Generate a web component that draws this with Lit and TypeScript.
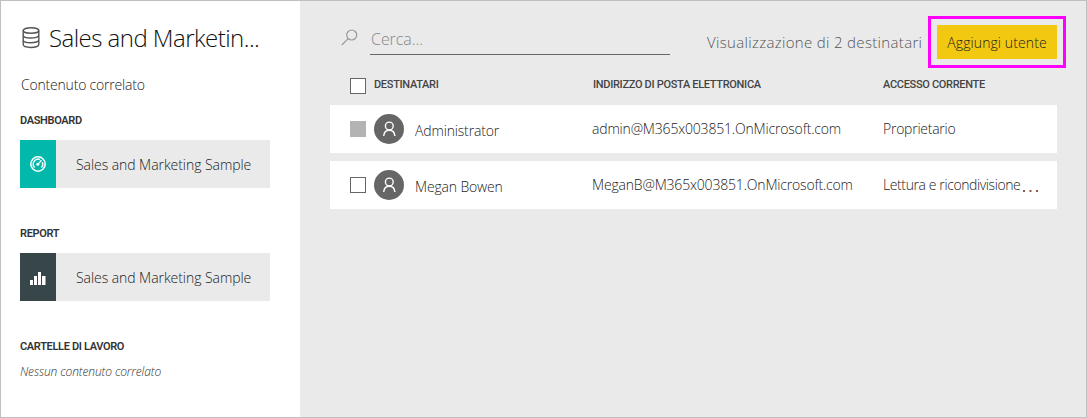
import { LitElement, html, css, svg } from "lit";
import { customElement, property } from "lit/decorators.js";

interface Recipient {
  name: string;
  mail: string;
  access: string;
  owner: boolean;
}

const recipients: Recipient[] = [
  { name: "Administrator", mail: "admin@M365x003851.OnMicrosoft.com", access: "Proprietario", owner: true },
  { name: "Megan Bowen", mail: "MeganB@M365x003851.OnMicrosoft.com", access: "Lettura e ricondivisione", owner: false },
];

const gauge = svg`
  <circle cx="8" cy="8" r="7.2" fill="none" stroke="#fff" stroke-width="1.5"/>
  <path d="M4.6 11.4A4.9 4.9 0 0 1 10 3.5M12.4 6.2A4.9 4.9 0 0 1 11.4 11.4" fill="none" stroke="#fff" stroke-width="1.4"/>
  <path d="M7.7 8.4L11.6 4.2" stroke="#fff" stroke-width="1.3"/>
  <circle cx="7.8" cy="8.3" r="1.5" fill="#fff"/>`;

const bars = svg`
  <path d="M0 11h3v5H0zM4 7h3v9H4zM8 3h3v13H8zM12 7h3.500v9H12z" fill="#fff"/>`;

@customElement("related-tile")
class RelatedTile extends LitElement {
  @property() kind = "dashboard";
  @property() label = "";

  static styles = css`
    :host { display: flex; width: 250px; height: 48px; background: #eaeaea; }
    .icon { width: 36px; display: flex; align-items: center; padding-left: 10px; box-sizing: border-box; }
    .dashboard { background: #01b8aa; }
    .report { background: #374649; }
    .label { padding-left: 20px; font-size: 14px; line-height: 49px; color: #222; white-space: nowrap; letter-spacing: -0.06px; }
  `;

  render() {
    return html`
      <div class="icon ${this.kind}">
        <svg width="16" height="16" viewBox="0 0 16 16">${this.kind === "dashboard" ? gauge : bars}</svg>
      </div>
      <div class="label">${this.label}</div>`;
  }
}

@customElement("app-root")
class AppRoot extends LitElement {
  static styles = css`
    :host {
      display: flex; box-sizing: border-box; width: 1087px; height: 418px;
      border: 1px solid #c0c0c0; background: #eaeaea; overflow: hidden;
      font-family: "Open Sans", "Noto Sans", sans-serif; font-weight: 300; color: #222;
    }
    * { box-sizing: border-box; }
    svg { display: block; flex: none; }
    .side { width: 299px; background: #fff; padding: 19px 0 0 19px; white-space: nowrap; }
    .title { display: flex; align-items: center; height: 36px; gap: 9px; margin-left: 2px; }
    .title-text { font-size: 24px; line-height: 36px; letter-spacing: -0.54px; color: #111; }
    .related { margin: 18px 0 0 1px; font-size: 14px; line-height: 22px; letter-spacing: -0.2px; }
    .group { font-family: Roboto, sans-serif; font-weight: 600; font-size: 11px; line-height: 16px; letter-spacing: -0.34px; color: #333; }
    .g1 { margin: 17px 0 11px; }
    .g2 { margin: 38px 0 11px; }
    .g3 { margin: 38px 0 0; }
    .none { margin-top: 7px; font-size: 12px; line-height: 19px; font-style: italic; letter-spacing: -0.12px; color: #333; }
    .main { width: 757px; padding: 24px 0 0 30px; }
    .bar { display: flex; height: 34px; }
    .glass { margin: 4px 12px 0 11px; }
    .search { width: 300px; height: 30px; border-bottom: 1px solid #666; font-size: 16px; line-height: 28px; letter-spacing: -0.05px; color: #888; padding-left: 1px; }
    .count { width: 230px; margin-left: 37px; font-size: 15px; line-height: 34px; letter-spacing: 0.33px; color: #555; white-space: nowrap; }
    .add {
      width: 120px; height: 34px; background: #f2c811; outline: 3px solid #ff00ff; outline-offset: 6px;
      text-align: center; font-size: 14px; line-height: 35px; letter-spacing: 0.1px; white-space: nowrap;
    }
    .grid { display: grid; grid-template-columns: 16px 219px 298px 170px; padding-left: 20px; width: 727px; white-space: nowrap; }
    .head { height: 46px; padding-top: 19px; font-family: Roboto, sans-serif; font-weight: 500; font-size: 11px; line-height: 13px; letter-spacing: -0.31px; color: #444; }
    .first { padding-left: 8px; }
    .box { width: 16px; height: 16px; border: 1px solid #666; background: #fff; }
    .locked { border-color: #b3b3b3; background: #b3b3b3; }
    .row { height: 48px; background: #fff; font-size: 14px; line-height: 48px; color: #222; margin-bottom: 8px; }
    .row .box { margin-top: 16px; }
    .person { display: flex; padding: 0 0 0 8px; gap: 11px; line-height: 52px; letter-spacing: -0.16px; }
    .avatar { margin-top: 9px; }
    .col { padding-left: 8px; }
    .row .col { padding-left: 7px; letter-spacing: -0.18px; }
    .access { display: flex; gap: 3px; letter-spacing: -0.4px; }
    .access .owner { letter-spacing: -0.25px; }
  `;

  renderRow(r: Recipient) {
    return html`
      <div class="grid row">
        <div class="box ${r.owner ? "locked" : ""}"></div>
        <div class="person">
          <svg class="avatar" width="30" height="30" viewBox="0 0 30 30">
            <circle cx="15" cy="15" r="15" fill="#666"/>
            <circle cx="15.300" cy="12" r="3.900" fill="none" stroke="#fff" stroke-width="1.4"/>
            <path d="M9.700 22C10 18.400 12.200 16.200 15.300 16.200S20.600 18.400 20.900 22" fill="none" stroke="#fff" stroke-width="1.4"/>
          </svg>
          <span>${r.name}</span>
        </div>
        <div class="col">${r.mail}</div>
        <div class="access"><span class="${r.owner ? "owner" : ""}">${r.access}</span>
          ${r.owner ? "" : html`<svg width="18" height="34" viewBox="0 0 18 34"><path d="M0 29h2v2H0zM6.500 29h2v2H6.500zM13 29h2v2H13z" fill="#8a5a4a"/></svg>`}
        </div>
      </div>`;
  }

  render() {
    return html`
      <div class="side">
        <div class="title">
          <svg width="18" height="22" viewBox="0 0 18 22" fill="none" stroke="#555" stroke-width="1.4">
            <ellipse cx="9" cy="3.500" rx="7.800" ry="2.800"/>
            <path d="M1.200 3.500V17.600C1.200 21.400 16.800 21.400 16.800 17.600V3.500M1.200 8.200C1.200 12 16.800 12 16.800 8.200M1.200 12.900C1.200 16.700 16.800 16.700 16.800 12.900"/>
          </svg>
          <span class="title-text">Sales and Marketin...</span>
        </div>
        <div class="related">Contenuto correlato</div>
        <div class="group g1">DASHBOARD</div>
        <related-tile kind="dashboard" label="Sales and Marketing Sample"></related-tile>
        <div class="group g2">REPORT</div>
        <related-tile kind="report" label="Sales and Marketing Sample"></related-tile>
        <div class="group g3">CARTELLE DI LAVORO</div>
        <div class="none">Nessun contenuto correlato</div>
      </div>
      <div class="main">
        <div class="bar">
          <svg class="glass" width="17" height="17" viewBox="0 0 17 17" fill="none" stroke="#999" stroke-width="1.200">
            <circle cx="10.700" cy="6" r="5"/><path d="M7.200 9.600L.8 16"/>
          </svg>
          <div class="search">Cerca...</div>
          <div class="count">Visualizzazione di 2 destinatari</div>
          <div class="add">Aggiungi utente</div>
        </div>
        <div class="grid head">
          <div class="box"></div>
          <div class="first">DESTINATARI</div>
          <div class="col">INDIRIZZO DI POSTA ELETTRONICA</div>
          <div>ACCESSO CORRENTE</div>
        </div>
        ${recipients.map((r) => this.renderRow(r))}
      </div>`;
  }
}
